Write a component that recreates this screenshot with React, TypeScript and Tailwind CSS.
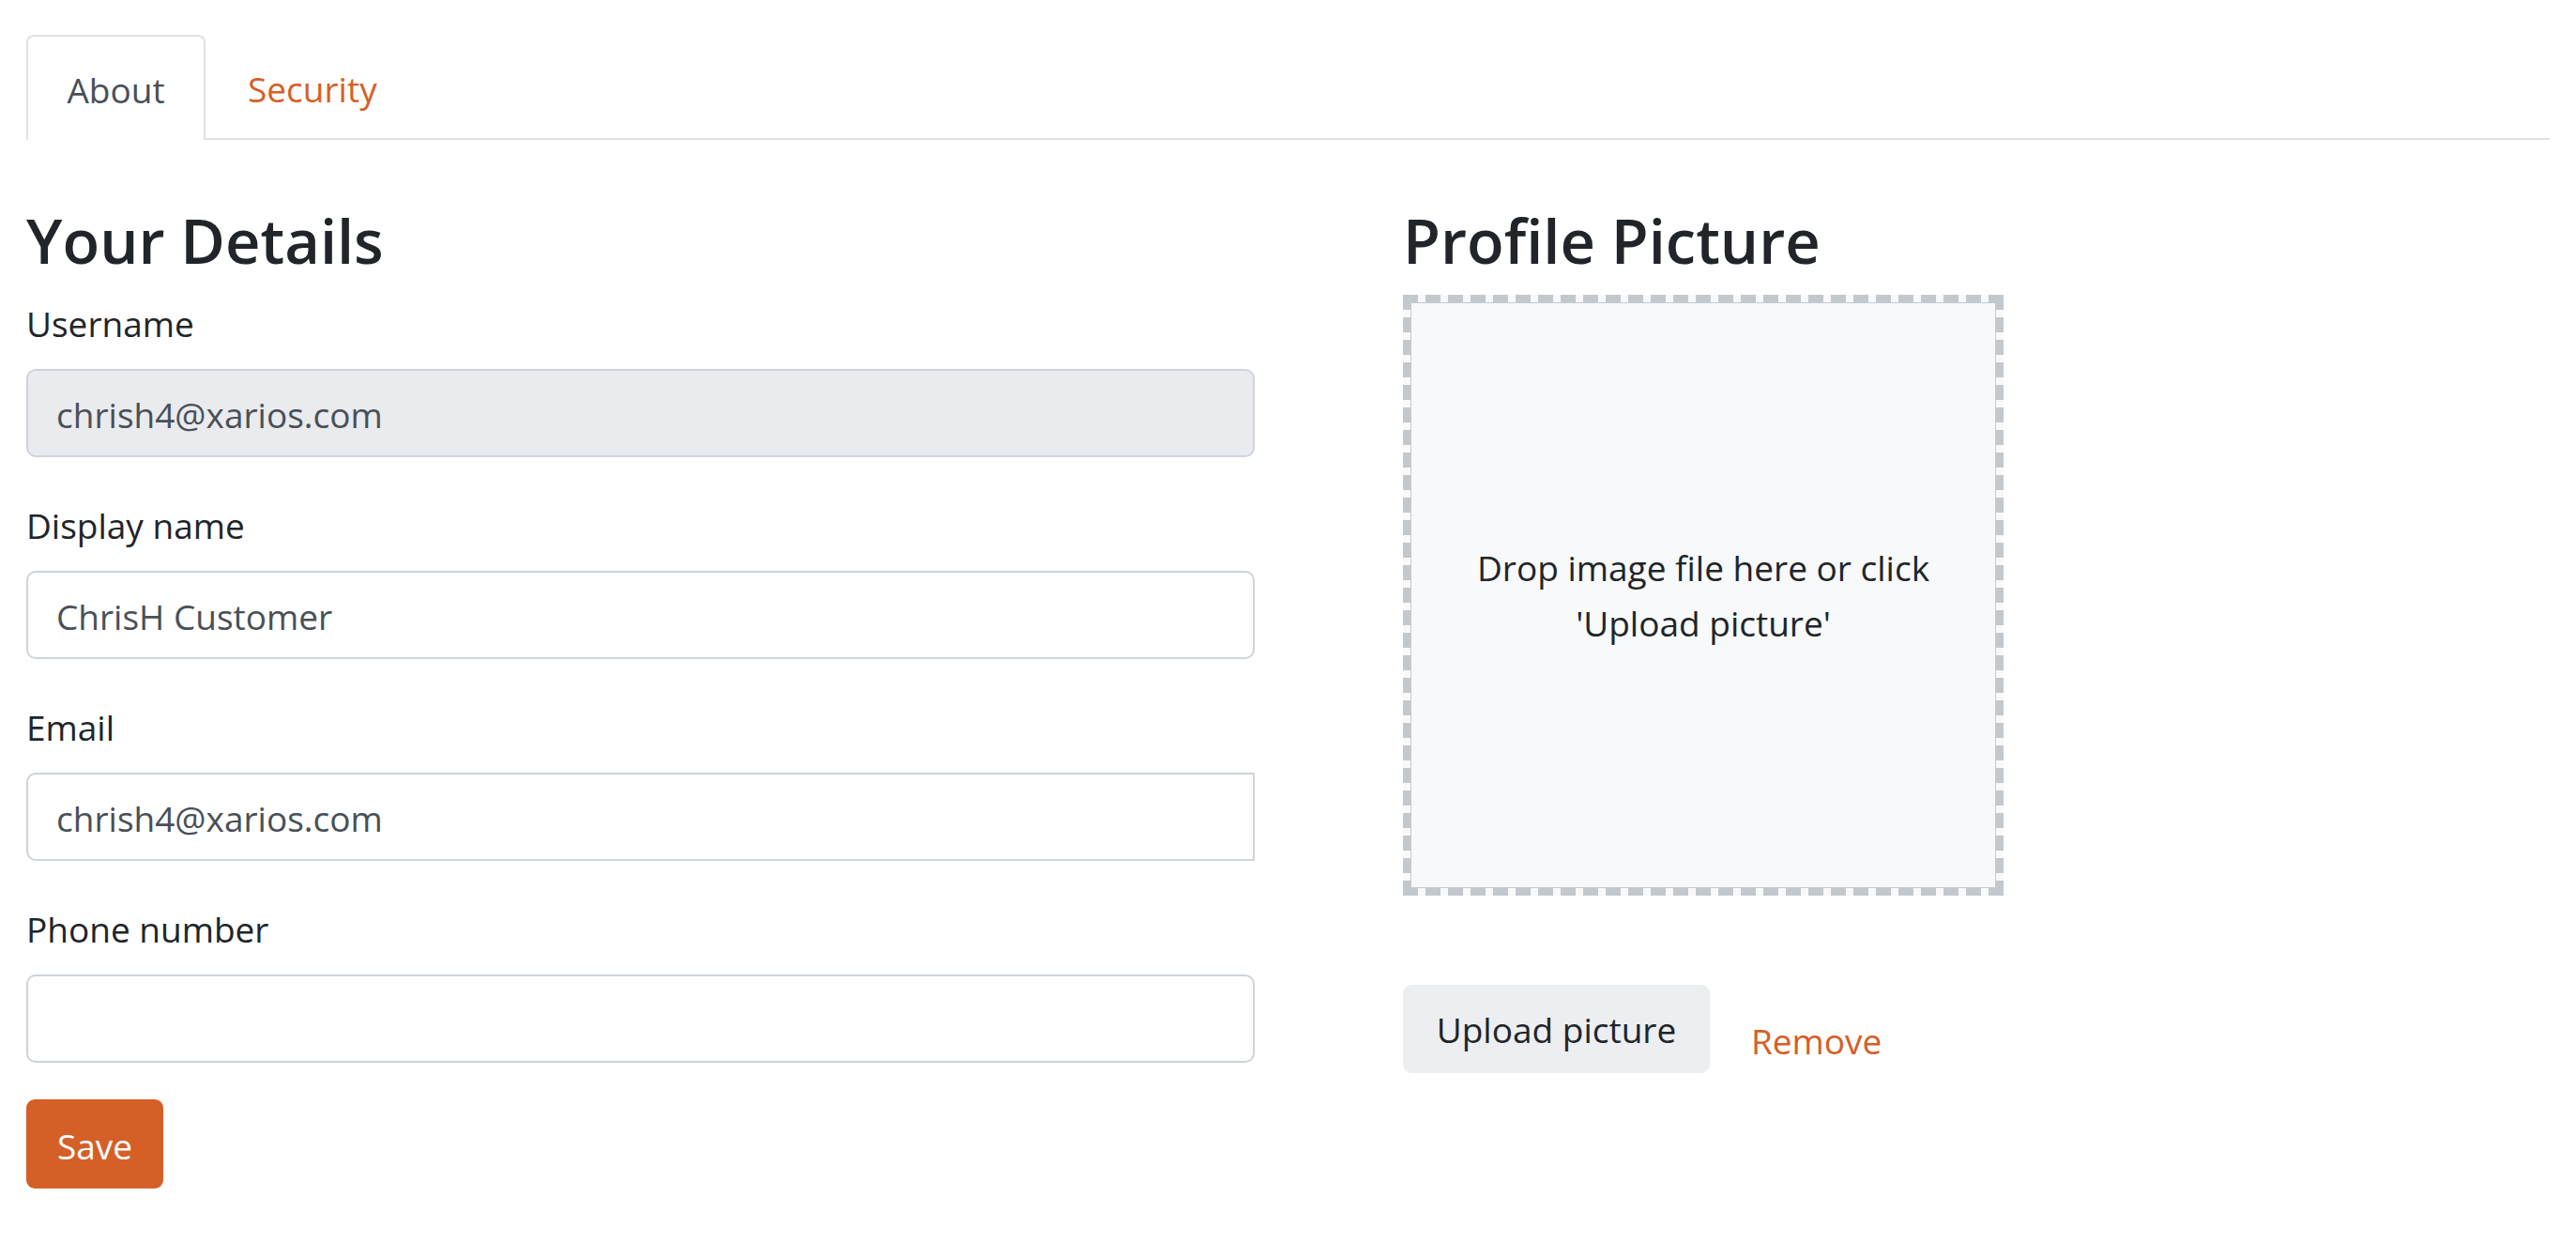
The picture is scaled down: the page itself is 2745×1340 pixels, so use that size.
import type { ReactNode } from "react";

const font = { fontFamily: '"Open Sans", "Noto Sans", sans-serif' };

function Field(props: { label: string; value?: string; disabled?: boolean; squareRight?: boolean }) {
	const bg = props.disabled ? "bg-[#e9ebef]" : "bg-white";
	const radius = props.squareRight ? "rounded-l-[10px]" : "rounded-[10px]";
	return (
		<div className="flex flex-col">
			<label className="h-[52px] text-[37px] leading-[52px] text-[#212529]">{props.label}</label>
			<div
				className={`mt-[22px] flex h-[94px] items-center border-2 border-[#ced4da] px-[30px] pt-[4px] text-[37px] text-[#495057] ${bg} ${radius}`}
			>
				{props.value}
			</div>
		</div>
	);
}

function Heading(props: { children: ReactNode }) {
	return (
		<h1 className="h-[70px] text-[65px] font-semibold leading-[70px] text-[#212529]">{props.children}</h1>
	);
}

export default function App() {
	return (
		<div className="min-h-screen w-full bg-white px-[28px] pt-[37px]" style={font}>
			<div className="flex border-b-2 border-[#dee2e6]">
				<div className="-mb-[2px] flex h-[112px] w-[191px] items-center justify-center rounded-t-[8px] border-2 border-b-0 border-[#dee2e6] bg-white pt-[4px] text-[37px] text-[#495057]">
					About
				</div>
				<div className="flex h-[110px] items-center px-[45px] pt-[6px] text-[37px] text-[#d46028]">Security</div>
			</div>

			<div className="mt-[72px] flex gap-[158px]">
				<div className="flex w-[1309px] flex-col">
					<Heading>Your Details</Heading>
					<div className="mt-[28px] flex flex-col gap-[47px]">
						<Field label="Username" value="chrish4@xarios.com" disabled />
						<Field label="Display name" value="ChrisH Customer" />
						<Field label="Email" value="chrish4@xarios.com" squareRight />
						<Field label="Phone number" />
					</div>
					<button className="mt-[39px] h-[95px] w-[146px] rounded-[9px] bg-[#d46028] pt-[4px] text-[37px] text-white">
						Save
					</button>
				</div>

				<div className="flex flex-col">
					<Heading>Profile Picture</Heading>
					<div className="mt-[23px] h-[640px] w-[640px] border-[8px] border-dashed border-[#c3c8cd] bg-[#f8f9fa]">
						<div className="flex h-full w-full items-center justify-center border border-[#c6cacf] px-[30px] text-center text-[37px] leading-[59px] text-[#212529]">
							Drop image file here or click
							<br />
							'Upload picture'
						</div>
					</div>
					<div className="mt-[95px] flex items-center">
						<button className="h-[94px] w-[327px] rounded-[9px] bg-[#eceef1] pt-[2px] text-[37px] text-[#212529]">
							Upload picture
						</button>
						<span className="ml-[44px] mt-[26px] text-[37px] text-[#d46028]">Remove</span>
					</div>
				</div>
			</div>
		</div>
	);
}
